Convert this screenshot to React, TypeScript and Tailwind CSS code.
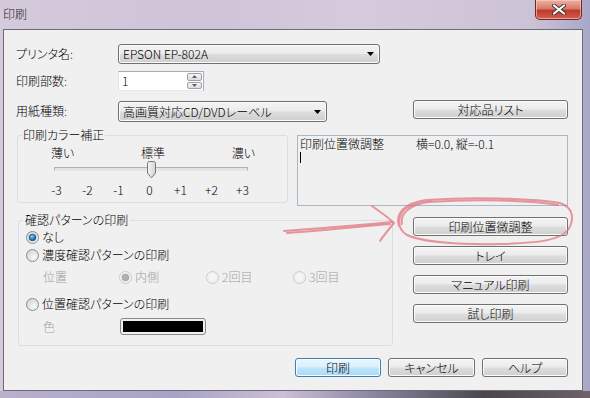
import React from 'react';
import clsx from 'clsx';

const btnBase = 'h-[19px] flex items-center justify-center rounded-[3px] border text-[12px] leading-[14px] text-black';
const btnGray = 'border-[#707070] bg-[linear-gradient(#f4f4f4_0%,#ebebeb_48%,#dddddd_52%,#cfcfcf_100%)] shadow-[inset_0_0_0_1px_#fbfbfb]';
const btnBlue = 'border-[#3c7fb1] bg-[linear-gradient(#eaf6fd_0%,#d9f0fc_48%,#bee6fd_52%,#a7d9f5_100%)] shadow-[inset_0_0_0_1px_#fcfcfc]';

const Btn = ({ children, className, primary }: { children: React.ReactNode; className?: string; primary?: boolean }) => (
  <button className={clsx(btnBase, primary ? btnBlue : btnGray, className)}>{children}</button>
);

const DownArrow = () => (
  <svg width="7" height="4" viewBox="0 0 7 4" className="shrink-0">
    <polygon points="0,0 7,0 3.5,4" fill="#000" />
  </svg>
);

const Combo = ({ text, className }: { text: string; className?: string }) => (
  <div className={clsx('flex items-center justify-between pl-[4px] pr-[5px] rounded-[3px] border border-[#707070] bg-[linear-gradient(#f4f4f4_0%,#ebebeb_48%,#dddddd_52%,#cfcfcf_100%)] shadow-[inset_0_0_0_1px_#fbfbfb]', className)}>
    <span className="text-[12px] leading-[14px]">{text}</span>
    <DownArrow />
  </div>
);

const Radio = ({ checked, disabled }: { checked?: boolean; disabled?: boolean }) => (
  <svg width="13" height="13" viewBox="0 0 13 13" className="shrink-0">
    <defs>
      <radialGradient id="rOuter" cx="65%" cy="70%" r="75%">
        <stop offset="0%" stopColor="#ffffff" />
        <stop offset="100%" stopColor="#cfcfcf" />
      </radialGradient>
      <radialGradient id="rDot" cx="40%" cy="35%" r="70%">
        <stop offset="0%" stopColor="#8fd0f5" />
        <stop offset="55%" stopColor="#2f83c3" />
        <stop offset="100%" stopColor="#1b4f7e" />
      </radialGradient>
    </defs>
    <circle cx="6.5" cy="6.5" r="6" fill={disabled ? '#f5f5f5' : 'url(#rOuter)'} stroke={disabled ? '#c9c9c9' : '#8c8e90'} />
    <circle cx="6.5" cy="6.5" r="4.5" fill="none" stroke={disabled ? '#ececec' : '#e2e2e2'} />
    {checked && (
      <circle cx="6.5" cy="6.5" r="3.3" fill={disabled ? '#b0b0b0' : 'url(#rDot)'} stroke={disabled ? '#9a9a9a' : '#1e4f78'} strokeWidth="0.8" />
    )}
  </svg>
);

const RadioRow = ({ label, checked, disabled, className }: { label: string; checked?: boolean; disabled?: boolean; className?: string }) => (
  <div className={clsx('flex items-center gap-[3px] h-[16px]', className)}>
    <Radio checked={checked} disabled={disabled} />
    <span className={clsx('text-[12px] leading-[14px]', disabled ? 'text-[#a0a0a0]' : 'text-black')}>{label}</span>
  </div>
);

const ticks = ['-3', '-2', '-1', '0', '+1', '+2', '+3'];

export default function App() {
  return (
    <div className="relative w-[590px] h-[398px] overflow-hidden flex flex-col font-['Noto_Sans_CJK_JP','Noto_Sans',sans-serif] font-light [font-feature-settings:'palt'] text-black bg-[linear-gradient(90deg,#d4cadb_0%,#cfc4d8_35%,#d6cbdc_60%,#cdc3d6_90%,#a8a6c8_100%)]">
      {/* title bar */}
      <div className="h-[29px] flex items-start justify-between shrink-0">
        <span className="pl-[3px] pt-[7px] text-[12px] leading-[14px] text-[#1a1a1a]">印刷</span>
        <div className="mr-[8px] w-[47px] h-[20px] rounded-b-[5px] border border-t-0 border-[#6b2a24] bg-[linear-gradient(#eab3a6_0%,#d97a68_45%,#c0392b_55%,#d0604c_100%)] flex items-center justify-center shadow-[inset_0_0_0_1px_rgba(255,210,200,0.6)]">
          <svg width="14" height="11" viewBox="0 0 14 11">
            <path d="M2 1.5 L12 9.5 M12 1.5 L2 9.5" stroke="#3a3a3a" strokeWidth="4" strokeLinecap="round" />
            <path d="M2 1.5 L12 9.5 M12 1.5 L2 9.5" stroke="#ffffff" strokeWidth="2.2" strokeLinecap="round" />
          </svg>
        </div>
      </div>

      {/* client area */}
      <div className="ml-[3px] w-[580px] h-[362px] shrink-0 border border-[#6d6b7a] bg-[#f0f0f0] flex flex-col">
        {/* printer name */}
        <div className="mt-[14px] h-[20px] flex items-center">
          <span className="w-[114px] pl-[12px] text-[12px] leading-[14px]">プリンタ名:</span>
          <Combo text="EPSON EP-802A" className="w-[262px] h-[20px]" />
        </div>

        {/* copies */}
        <div className="mt-[7px] h-[20px] flex items-center">
          <span className="w-[114px] pl-[12px] text-[12px] leading-[14px]">印刷部数:</span>
          <div className="w-[86px] h-[20px] flex bg-white border border-[#abadb3] border-l-[#e2e3ea] border-b-[#e3e9ef]">
            <span className="flex-1 pl-[3px] text-[12px] leading-[18px]">1</span>
            <div className="w-[16px] flex flex-col py-px pr-px gap-px">
              <div className="flex-1 flex items-center justify-center rounded-[2px] border border-[#a0a0a0] bg-[linear-gradient(#f6f6f6,#dcdcdc)]">
                <svg width="5" height="3" viewBox="0 0 5 3"><polygon points="0,3 5,3 2.5,0" fill="#4d6185" /></svg>
              </div>
              <div className="flex-1 flex items-center justify-center rounded-[2px] border border-[#a0a0a0] bg-[linear-gradient(#f6f6f6,#dcdcdc)]">
                <svg width="5" height="3" viewBox="0 0 5 3"><polygon points="0,0 5,0 2.5,3" fill="#4d6185" /></svg>
              </div>
            </div>
          </div>
        </div>

        {/* paper type */}
        <div className="mt-[9px] h-[22px] flex items-start pr-[14px]">
          <span className="w-[114px] pl-[12px] mt-[4px] text-[12px] leading-[14px]">用紙種類:</span>
          <Combo text="高画質対応CD/DVDレーベル" className="mt-[1px] w-[209px] h-[21px] pr-[4px]" />
          <Btn className="ml-auto w-[155px]">対応品リスト</Btn>
        </div>

        {/* color correction + info box */}
        <div className="mt-[6px] flex items-start">
          <fieldset className="ml-[13px] w-[271px] h-[75px] border border-[#d5dfe5] rounded-[3px]">
            <legend className="ml-[4px] px-[1px] text-[12px] leading-[14px]">印刷カラー補正</legend>
            <div className="flex flex-col">
              <div className="mt-[4px] flex justify-between pl-[33px] pr-[32px] text-[12px] leading-[14px]">
                <span>薄い</span>
                <span>標準</span>
                <span>濃い</span>
              </div>
              <div className="relative mt-px ml-[36px] w-[194px] h-[18px]">
                <div className="absolute left-0 right-0 top-[6px] h-[4px] rounded-[1px] border border-[#b0b0b0] border-b-[#e8e8e8] bg-[#e4e4e4]" />
                <svg width="11" height="18" viewBox="0 0 11 18" className="absolute left-[92px] top-0">
                  <defs>
                    <linearGradient id="thumb" x1="0" y1="0" x2="1" y2="0">
                      <stop offset="0%" stopColor="#f6f6f6" />
                      <stop offset="100%" stopColor="#d2d2d2" />
                    </linearGradient>
                  </defs>
                  <path d="M1.5 2.5 Q1.5 0.5 3.5 0.5 H7.5 Q9.5 0.5 9.5 2.5 V12 L5.5 16.8 L1.5 12 Z" fill="url(#thumb)" stroke="#787878" />
                </svg>
              </div>
              <div className="mt-[4px] pl-[23px] grid grid-cols-[repeat(7,31px)] text-[12px] leading-[14px]">
                {ticks.map(t => (
                  <span key={t} className="text-center">{t}</span>
                ))}
              </div>
            </div>
          </fieldset>
          <div className="mt-[7px] ml-[9px] w-[271px] h-[71px] border border-[#a7b8c6] bg-[#f0f0f0] pl-[2px] pt-px text-[12px] leading-[14px]">
            <div className="flex">
              <span className="w-[116px]">印刷位置微調整</span>
              <span>横=0.0, 縦=-0.1</span>
            </div>
            <div className="mt-[1px] w-px h-[11px] bg-black" />
          </div>
        </div>

        {/* pattern print + side buttons */}
        <div className="mt-[7px] flex items-start">
          <fieldset className="ml-[14px] w-[375px] h-[133px] border border-[#d5dfe5] rounded-[3px]">
            <legend className="ml-[4px] px-[2px] text-[12px] leading-[14px]">確認パターンの印刷</legend>
            <div className="flex flex-col pl-[7px]">
              <RadioRow label="なし" checked className="mt-[2px]" />
              <RadioRow label="濃度確認パターンの印刷" className="mt-[2px]" />
              <div className="mt-[6px] h-[16px] flex items-center pl-[17px]">
                <span className="w-[76px] text-[12px] leading-[14px] text-[#a0a0a0]">位置</span>
                <RadioRow label="内側" checked disabled className="w-[87px]" />
                <RadioRow label="2回目" disabled className="w-[87px]" />
                <RadioRow label="3回目" disabled />
              </div>
              <RadioRow label="位置確認パターンの印刷" className="mt-[11px]" />
              <div className="mt-[6px] h-[17px] flex items-center pl-[17px]">
                <span className="w-[77px] text-[12px] leading-[14px] text-[#a0a0a0]">色</span>
                <div className="w-[86px] h-[17px] rounded-[3px] border border-[#8a8a8a] bg-[#f0f0f0] p-[2px]">
                  <div className="w-full h-full bg-black" />
                </div>
              </div>
            </div>
          </fieldset>
          <div className="ml-[20px] mt-[4px] w-[155px] flex flex-col gap-[10px]">
            <Btn>印刷位置微調整</Btn>
            <Btn>トレイ</Btn>
            <Btn>マニュアル印刷</Btn>
            <Btn>試し印刷</Btn>
          </div>
        </div>

        {/* dialog buttons */}
        <div className="mt-[12px] flex justify-end gap-[7px] pr-[14px]">
          <Btn primary className="w-[86px]">印刷</Btn>
          <Btn className="w-[87px]">キャンセル</Btn>
          <Btn className="w-[86px]">ヘルプ</Btn>
        </div>
      </div>

      {/* bottom frame */}
      <div className="flex-1 bg-[linear-gradient(90deg,#b9b0cc_0%,#a7a3c6_30%,#cdbfd4_48%,#8f8aa6_62%,#4a464e_82%,#6d6268_100%)]" />

      {/* hand-drawn annotation */}
      <svg className="absolute inset-0 pointer-events-none" width="590" height="398" viewBox="0 0 590 398">
        <g fill="none" stroke="#e06c78" strokeOpacity="0.7" strokeWidth="2" strokeLinecap="round" strokeLinejoin="round">
          <path d="M284 231 C 310 229, 350 226, 392 222" />
          <path d="M287 233 C 320 231, 356 227, 390 224" />
          <path d="M372 206 C 380 212, 388 217, 394 223 C 389 229, 384 235, 380 241" />
          <path d="M399 226 C 395 213, 405 203, 426 200 C 470 197, 530 198, 560 203 C 573 207, 575 219, 568 230 C 560 240, 540 243, 500 244 C 460 245, 422 242, 407 235 C 397 229, 397 217, 405 209 C 412 203, 420 201, 432 200" />
          <path d="M402 224 C 400 214, 409 205, 428 202 C 475 199, 530 200, 558 205" />
        </g>
      </svg>
    </div>
  );
}
